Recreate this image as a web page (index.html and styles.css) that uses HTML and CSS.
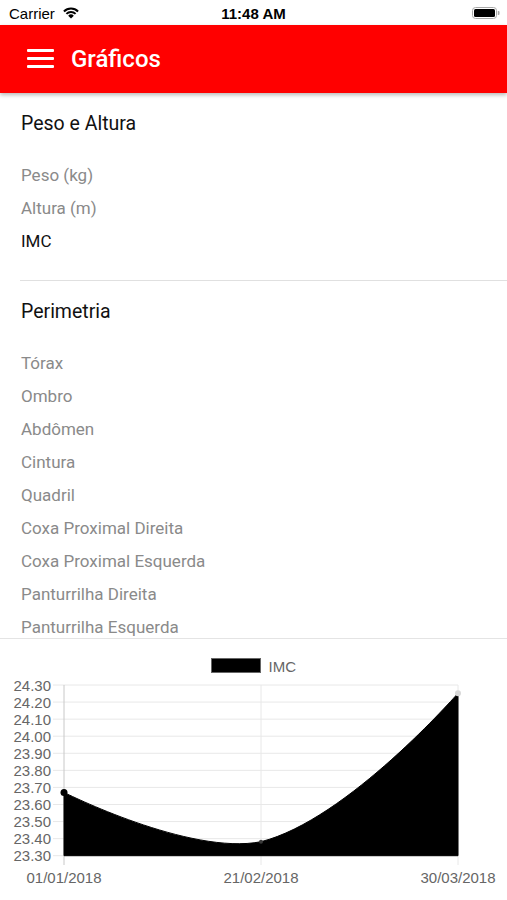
FILE: index.html
```html
<!DOCTYPE html>
<html lang="pt">
<head>
<meta charset="utf-8">
<title>Gráficos</title>
<link rel="stylesheet" href="styles.css">
</head>
<body>
<div class="phone">
  <div class="status-bar">
    <div class="status-left">
      <span class="carrier">Carrier</span>
      <svg class="wifi" width="18" height="12" viewBox="0 0 18 12">
        <path d="M9 11.5 L6.17 8.67 A4 4 0 0 1 11.83 8.67 Z" fill="#000"/>
        <path d="M4.4 6.9 A6.5 6.5 0 0 1 13.6 6.9" fill="none" stroke="#000" stroke-width="2"/>
        <path d="M1.93 4.43 A10 10 0 0 1 16.07 4.43" fill="none" stroke="#000" stroke-width="2"/>
      </svg>
    </div>
    <div class="status-time">11:48 AM</div>
    <div class="status-right">
      <svg class="battery" width="28" height="12" viewBox="0 0 28 12">
        <rect x="0.5" y="0.5" width="24" height="11" rx="3" fill="none" stroke="#a8a8a8"/>
        <rect x="2" y="2" width="21" height="8" rx="1.5" fill="#000"/>
        <path d="M25.8 4 h0.7 a1 1 0 0 1 1 1 v2 a1 1 0 0 1 -1 1 h-0.7 z" fill="#a8a8a8"/>
      </svg>
    </div>
  </div>

  <header class="app-bar">
    <div class="menu-icon">
      <span></span><span></span><span></span>
    </div>
    <h1 class="app-title">Gráficos</h1>
  </header>

  <div class="list">
    <section class="section">
      <h2 class="section-title">Peso e Altura</h2>
      <ul class="items">
        <li class="item">Peso (kg)</li>
        <li class="item">Altura (m)</li>
        <li class="item active">IMC</li>
      </ul>
    </section>
    <hr class="divider">
    <section class="section">
      <h2 class="section-title">Perimetria</h2>
      <ul class="items">
        <li class="item">Tórax</li>
        <li class="item">Ombro</li>
        <li class="item">Abdômen</li>
        <li class="item">Cintura</li>
        <li class="item">Quadril</li>
        <li class="item">Coxa Proximal Direita</li>
        <li class="item">Coxa Proximal Esquerda</li>
        <li class="item">Panturrilha Direita</li>
        <li class="item">Panturrilha Esquerda</li>
      </ul>
    </section>
  </div>

  <div class="chart">
    <svg class="chart-svg" width="507" height="260" viewBox="0 0 507 260">
      <!-- legend -->
      <rect x="211.5" y="19.5" width="49" height="14" fill="#000" stroke="#666" stroke-width="1"/>
      <text class="legend-label" x="268.5" y="27">IMC</text>

      <!-- horizontal grid -->
      <g class="grid">
        <line x1="53" y1="46" x2="458" y2="46"/>
        <line x1="53" y1="63.07" x2="458" y2="63.07"/>
        <line x1="53" y1="80.14" x2="458" y2="80.14"/>
        <line x1="53" y1="97.21" x2="458" y2="97.21"/>
        <line x1="53" y1="114.28" x2="458" y2="114.28"/>
        <line x1="53" y1="131.35" x2="458" y2="131.35"/>
        <line x1="53" y1="148.42" x2="458" y2="148.42"/>
        <line x1="53" y1="165.49" x2="458" y2="165.49"/>
        <line x1="53" y1="182.56" x2="458" y2="182.56"/>
        <line x1="53" y1="199.63" x2="458" y2="199.63"/>
        <line x1="53" y1="216.7" x2="458" y2="216.7"/>
        <line x1="261" y1="46" x2="261" y2="226"/>
        <line x1="458" y1="46" x2="458" y2="226"/>
      </g>
      <line class="axis" x1="64" y1="46" x2="64" y2="226"/>

      <!-- y labels -->
      <g class="tick-label y-labels">
        <text x="51" y="46">24.30</text>
        <text x="51" y="63.07">24.20</text>
        <text x="51" y="80.14">24.10</text>
        <text x="51" y="97.21">24.00</text>
        <text x="51" y="114.28">23.90</text>
        <text x="51" y="131.35">23.80</text>
        <text x="51" y="148.42">23.70</text>
        <text x="51" y="165.49">23.60</text>
        <text x="51" y="182.56">23.50</text>
        <text x="51" y="199.63">23.40</text>
        <text x="51" y="216.7">23.30</text>
      </g>

      <!-- x labels -->
      <g class="tick-label x-labels">
        <text x="64" y="238">01/01/2018</text>
        <text x="261" y="238">21/02/2018</text>
        <text x="458" y="238">30/03/2018</text>
      </g>

      <!-- area -->
      <path d="M64 153.4 C64 153.4 189.8 216.7 261 202.7 C347.4 180.9 458 54.2 458 54.2 L458 216.7 L64 216.7 Z" fill="#000" stroke="#000" stroke-width="1"/>
      <circle cx="64" cy="153.4" r="3.5" fill="#000"/>
      <circle cx="261" cy="202.7" r="2" fill="#3a3a3a"/>
      <circle cx="458" cy="54.2" r="3" fill="#d8d8d8"/>
    </svg>
  </div>
</div>
</body>
</html>
```

FILE: styles.css
```css
* {
  box-sizing: border-box;
}

html, body {
  margin: 0;
  padding: 0;
  background: #fff;
}

.phone {
  width: 507px;
  height: 900px;
  overflow: hidden;
  display: flex;
  flex-direction: column;
  font-family: Roboto, "Liberation Sans", sans-serif;
}

/* status bar */
.status-bar {
  height: 25px;
  flex: none;
  display: grid;
  grid-template-columns: 1fr auto 1fr;
  align-items: center;
  font-family: "Liberation Sans", Arial, sans-serif;
  font-size: 15px;
  color: #000;
  background: #fff;
}

.status-left {
  display: flex;
  align-items: center;
  padding-left: 9px;
  gap: 7px;
}

.carrier {
  line-height: 1;
  padding-top: 1px;
}

.wifi {
  display: block;
  margin-top: 1px;
}

.status-time {
  font-weight: bold;
  line-height: 1;
  padding-top: 1px;
}

.status-right {
  display: flex;
  justify-content: flex-end;
  padding-right: 7px;
}

.battery {
  display: block;
}

/* app bar */
.app-bar {
  height: 68px;
  flex: none;
  background: #ff0000;
  display: flex;
  align-items: center;
  padding-left: 27px;
  gap: 17px;
  position: relative;
  z-index: 2;
  box-shadow: 0 2px 4px rgba(0, 0, 0, 0.28);
}

.menu-icon {
  width: 27px;
  display: flex;
  flex-direction: column;
  gap: 5px;
  margin-top: -1px;
}

.menu-icon span {
  display: block;
  height: 3px;
  background: #fff;
  border-radius: 1px;
}

.app-title {
  margin: 0;
  color: #fff;
  font-size: 24px;
  font-weight: 500;
}

/* list */
.list {
  height: 546px;
  flex: none;
  overflow: hidden;
  border-bottom: 1px solid #e4e4e4;
  position: relative;
  z-index: 1;
}

.section-title {
  margin: 0;
  height: 60px;
  display: flex;
  align-items: center;
  padding-left: 21px;
  font-size: 19.5px;
  font-weight: 400;
  color: #111;
}

.items {
  list-style: none;
  margin: 0;
  padding: 5.5px 0 22.5px;
}

.item {
  height: 33px;
  display: flex;
  align-items: center;
  padding-left: 21px;
  font-size: 17px;
  color: #8a8a8a;
}

.item.active {
  color: #111;
}

.divider {
  margin: 0 0 0 20px;
  border: 0;
  height: 1px;
  background: #e0e0e0;
}

/* chart */
.chart {
  flex: 1;
}

.chart-svg {
  display: block;
}

.grid line {
  stroke: #e8e8e8;
  stroke-width: 1;
}

.axis {
  stroke: #c8c8c8;
  stroke-width: 1;
}

.tick-label text,
.legend-label {
  font-family: "Liberation Sans", Arial, sans-serif;
  font-size: 15px;
  fill: #666;
  dominant-baseline: central;
}

.y-labels text {
  text-anchor: end;
}

.x-labels text {
  text-anchor: middle;
}
```
